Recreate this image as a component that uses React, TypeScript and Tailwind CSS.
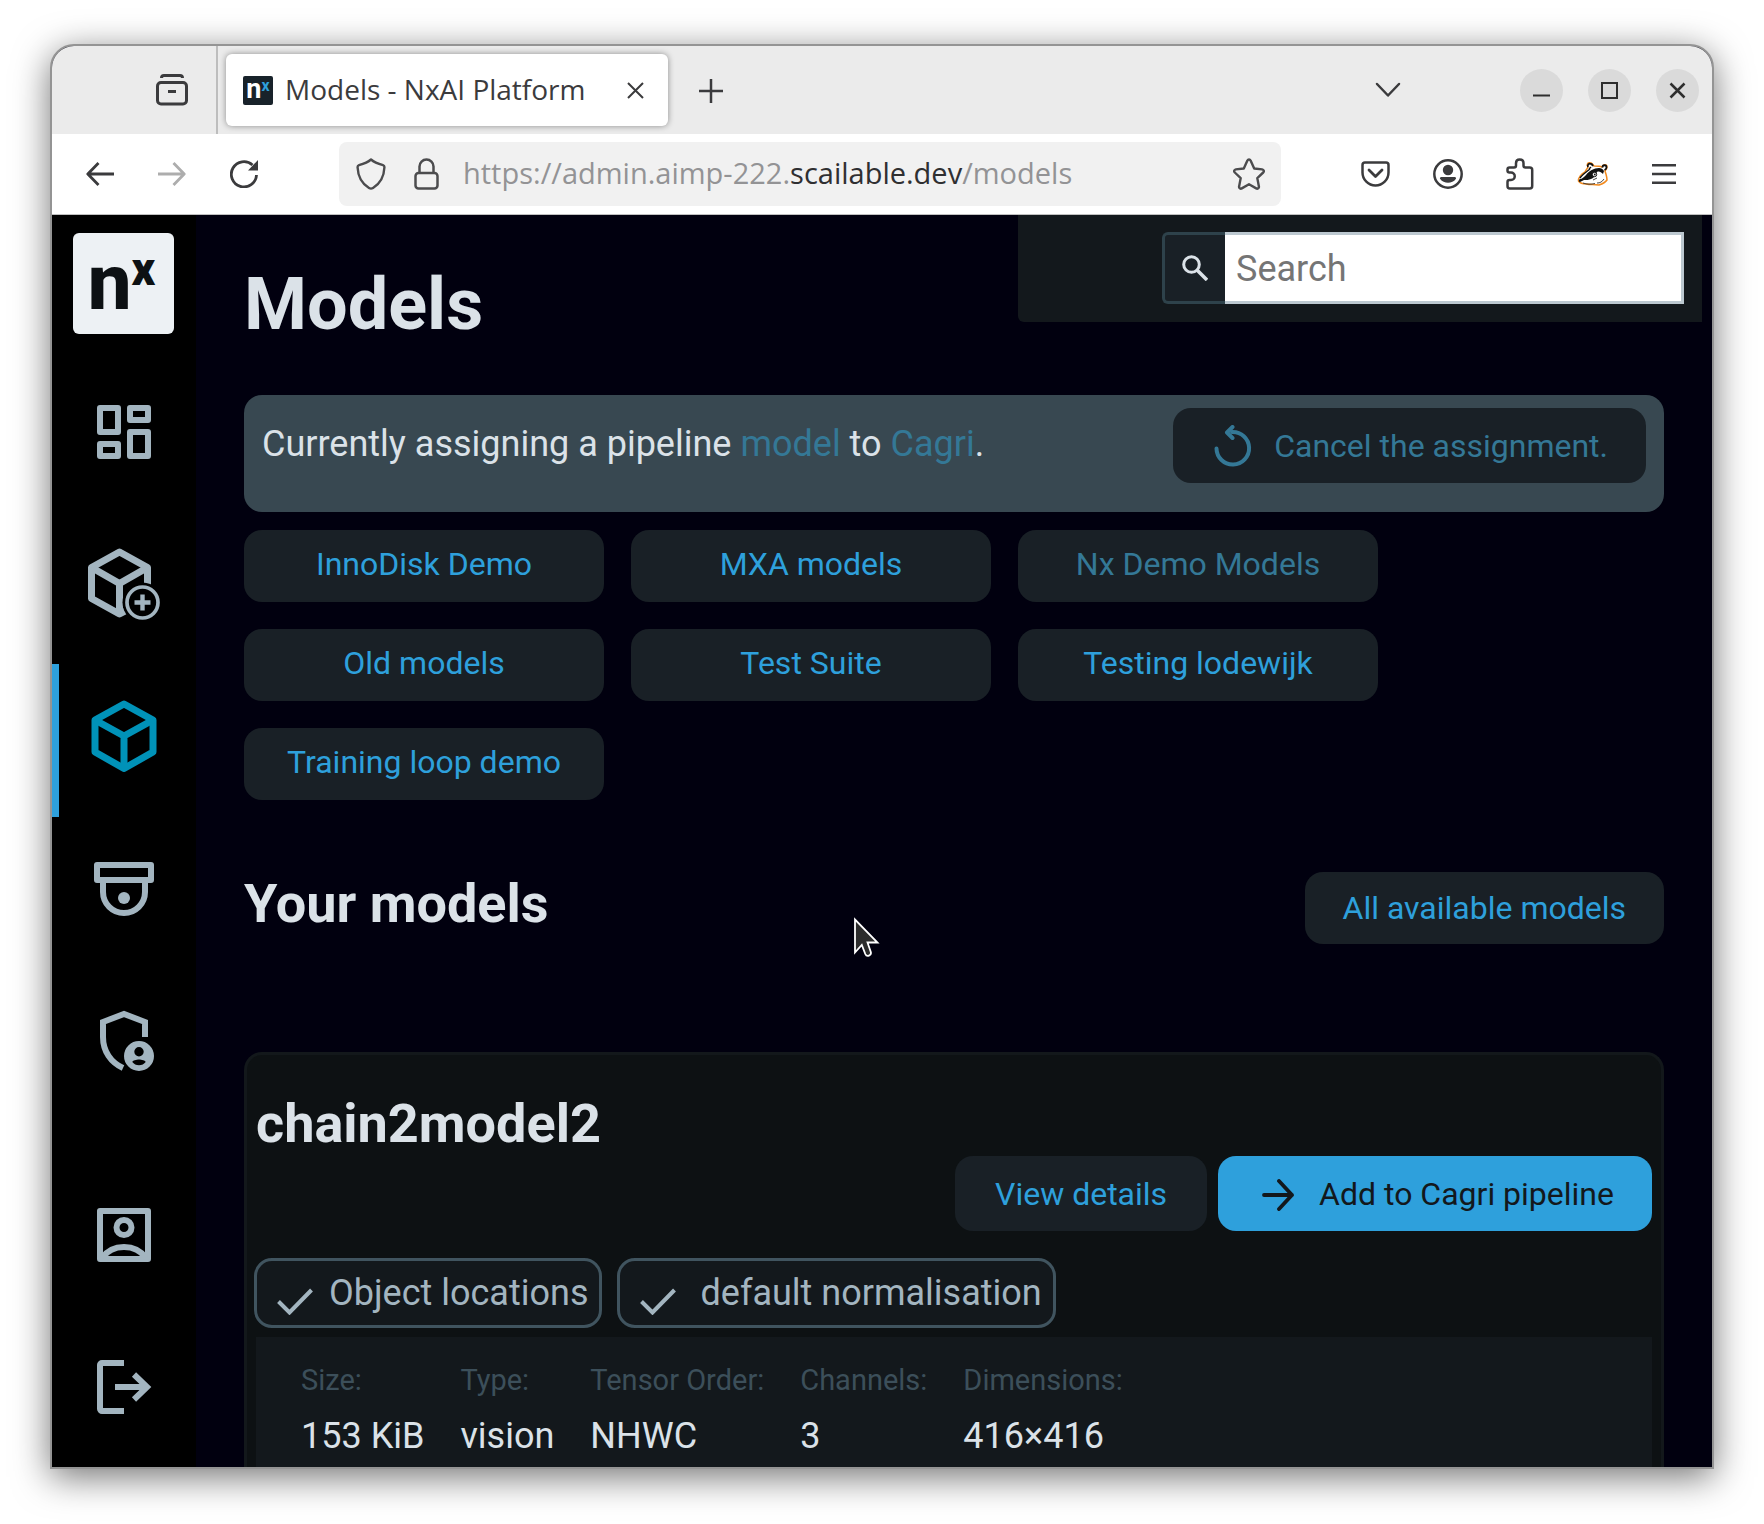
import React from "react";

type IconProps = { w: number; h: number; children: React.ReactNode; className?: string };

function Icon({ w, h, children, className = "" }: IconProps) {
  return (
    <svg
      width={w}
      height={h}
      viewBox={`0 0 ${w} ${h}`}
      fill="none"
      stroke="currentColor"
      aria-hidden="true"
      className={`shrink-0 ${className}`}
    >
      {children}
    </svg>
  );
}

/* ---------- Browser chrome ---------- */

function WindowButton({ label, children }: { label: string; children: React.ReactNode }) {
  return (
    <button
      aria-label={label}
      className="flex size-[43px] items-center justify-center rounded-full bg-[#dadada] text-[#2e2e2e]"
    >
      {children}
    </button>
  );
}

function TabBar() {
  return (
    <div className="flex h-[88px] items-center bg-[#ebebeb] pr-[13px] text-[#3b3b3d]">
      <div className="flex h-full w-[166px] items-center justify-end border-r-2 border-[#bdbdbd] pr-7">
        <button aria-label="View recent browsing">
          <Icon w={32} h={32}>
            <path d="M5.500 4c0-1.500 1-2.500 2.500-2.500h16c1.500 0 2.500 1 2.500 2.500" strokeWidth="3" />
            <rect x="1.500" y="8.500" width="29" height="21.500" rx="3.500" strokeWidth="3" />
            <path d="M12 17.500h8" strokeWidth="3" />
          </Icon>
        </button>
      </div>
      <div className="ml-2 flex h-[72px] w-[442px] items-center rounded-md bg-white pr-6 pl-[17px] shadow-[0_0_6px_rgba(0,0,0,0.4)]">
        <span className="flex h-[29px] w-[30px] shrink-0 justify-center rounded-xs bg-[#18222a] font-['Roboto',sans-serif] font-bold">
          <span className="text-[27px] leading-[27px] text-white">n</span>
          <span className="text-[16px] leading-[19px] text-[#2ea0dc]">x</span>
        </span>
        <span className="ml-3 grow pb-0.5 text-[28px] leading-9 whitespace-nowrap">Models - NxAI Platform</span>
        <button aria-label="Close tab">
          <Icon w={17} h={17}>
            <path d="M1 1l15 15M16 1L1 16" strokeWidth="2" />
          </Icon>
        </button>
      </div>
      <button aria-label="New tab" className="ml-[31px] pt-0.5">
        <Icon w={24} h={24}>
          <path d="M12 0v24M0 12h24" strokeWidth="2.500" />
        </Icon>
      </button>
      <div className="grow" />
      <button aria-label="List all tabs" className="mr-[119px]">
        <Icon w={26} h={16}>
          <path d="M2 2l11 11.500L24 2" strokeWidth="2.500" strokeLinecap="round" strokeLinejoin="round" />
        </Icon>
      </button>
      <div className="flex gap-[25px]">
        <WindowButton label="Minimize">
          <Icon w={17} h={17}>
            <path d="M0 13.500h17" strokeWidth="2" />
          </Icon>
        </WindowButton>
        <WindowButton label="Maximize">
          <Icon w={17} h={17}>
            <path d="M1 1h15v15H1z" strokeWidth="2" />
          </Icon>
        </WindowButton>
        <WindowButton label="Close">
          <Icon w={17} h={17}>
            <path d="M1.500 1.500l14 14M15.500 1.500l-14 14" strokeWidth="2.500" />
          </Icon>
        </WindowButton>
      </div>
    </div>
  );
}

function Badger() {
  return (
    <Icon w={32} h={26}>
      <path
        d="M1.500 20C1 17 4 13 8 11c1-2 2-3 3-5C9 3 11 1 14 2c2 1 2 2 3 3 3 0 6 0 8 1 1-3 5-3 5 0 0 2-1 3-2 4 1 3 2 6 2 9-2 3-5 4-8 5-5-1-8 0-13-1-3 0-6-1-7.500-3z"
        fill="#fff"
        stroke="#f28a1e"
        strokeWidth="1.500"
      />
      <path d="M11 6c-1-2 1-4 3-3 1 0 2 2 2 2M25.500 6.500c0-3 4-3 4 0 0 1-1 2-2 2.500" stroke="#111" strokeWidth="1.800" />
      <path d="M9 14c3-4 8-7 13-7 2 0 4 1 5 3l-1 3c-2-2-4-3-6-2-1 3-3 6-6 7-2 1-5 1-7 1l-4 2c-2 0-1-3 0-3 2 0 4-2 6-4z" fill="#111" stroke="none" />
      <path d="M3 17c2-3 6-6 10-9M12 8l2-2" stroke="#111" strokeWidth="1.400" />
      <circle cx="17.500" cy="13.500" r="2.200" fill="#fff" stroke="#111" strokeWidth="1" />
      <circle cx="17.800" cy="13.500" r="0.900" fill="#111" stroke="none" />
      <path d="M6 22c4 1.500 8 1.500 12 .5M20 22c3 0 5-1 7-4M16 19l4-2" stroke="#333" strokeWidth="0.900" />
    </Icon>
  );
}

function NavBar() {
  return (
    <div className="flex h-[81px] items-center border-b border-[#c0c0c0] bg-white pr-9 pl-[34px] text-[#3b3b3d]">
      <div className="flex shrink-0 items-center gap-[44px]">
        <button aria-label="Back">
          <Icon w={28} h={24}>
            <path d="M28 12H2M12.500 1L1.800 12l10.700 11" strokeWidth="2.800" strokeLinejoin="round" />
          </Icon>
        </button>
        <button aria-label="Forward" className="text-[#adadad]" disabled>
          <Icon w={28} h={24}>
            <path d="M0 12h26M15.500 1l10.700 11-10.700 11" strokeWidth="2.800" strokeLinejoin="round" />
          </Icon>
        </button>
        <button aria-label="Reload">
          <Icon w={30} h={28}>
            <path d="M26.500 15A12.600 12.600 0 1 1 22.500 5" strokeWidth="2.800" />
            <path d="M28 0v10.500H18L28 0z" fill="currentColor" stroke="none" />
          </Icon>
        </button>
      </div>
      <div className="ml-[79px] flex h-16 max-w-[942px] flex-1 items-center rounded-lg bg-[#f1f1f1] pr-4 pl-[17px] text-[#4c4c4e]">
        <Icon w={30} h={32}>
          <path
            d="M15 1.500C11.500 4.500 7 6 3 7.200 1.800 7.600 1.500 8.500 1.600 9.500 2 19 6.500 26 13 30c1.300.8 2.700.8 4 0 6.500-4 11-11 11.400-20.500.1-1-.2-1.900-1.400-2.300C23 6 18.500 4.500 15 1.500z"
            strokeWidth="2.400"
            strokeLinejoin="round"
          />
        </Icon>
        <Icon w={26} h={32} className="ml-7">
          <rect x="1.500" y="15" width="22" height="15.500" rx="3" strokeWidth="2.500" />
          <path d="M5.500 15V8.500a7 7 0 0 1 14 0V15" strokeWidth="2.500" />
        </Icon>
        <input
          aria-label="Address"
          defaultValue="https://admin.aimp-222.scailable.dev/models"
          className="sr-only"
        />
        <span className="ml-[23px] grow pb-0.5 text-[29px] leading-9 whitespace-nowrap text-[#939395]">
          https://admin.aimp-222.<span className="text-[#2f2f31]">scailable.dev</span>/models
        </span>
        <button aria-label="Bookmark this page">
          <Icon w={32} h={32}>
            <path
              d="M14.400 2.500c.7-1.300 2.500-1.300 3.200 0l3.600 8 8 .9c1.600.2 2.200 2 1 3.100l-5.900 5.600 1.600 8.400c.3 1.500-1.300 2.700-2.700 1.900L16 26.300l-7.200 4.100c-1.400.8-3-.4-2.700-1.900l1.600-8.400-5.900-5.600c-1.200-1.100-.6-2.900 1-3.100l8-.9z"
              strokeWidth="2.400"
              strokeLinejoin="round"
            />
          </Icon>
        </button>
      </div>
      <div className="ml-auto flex shrink-0 items-center gap-[43px] pl-20">
        <button aria-label="Save to Pocket">
          <Icon w={29} h={26}>
            <path d="M4 1.500h21c1.500 0 2.500 1 2.500 2.500v7.500a13 13 0 0 1-26 0V4c0-1.500 1-2.500 2.500-2.500z" strokeWidth="2.500" />
            <path d="M8 9l6.500 6.500L21 9" strokeWidth="2.800" strokeLinecap="round" strokeLinejoin="round" />
          </Icon>
        </button>
        <button aria-label="Account">
          <Icon w={30} h={30}>
            <circle cx="15" cy="15" r="13.700" strokeWidth="2.500" />
            <circle cx="15" cy="11" r="5.200" fill="currentColor" stroke="none" />
            <path d="M8.500 18h13c1.500 0 2 1 1.300 2-3.500 5-12 5-15.600 0-.7-1-.2-2 1.300-2z" fill="currentColor" stroke="none" />
          </Icon>
        </button>
        <button aria-label="Extensions">
          <Icon w={28} h={32}>
            <path
              d="M3.500 9.500H8c1.300 0 2-.5 2-2V5.200C10 3 11.500 1.500 13.700 1.500s3.800 1.500 3.800 3.700v2.300c0 1.500.7 2 2 2h4.200c1.500 0 2.500 1 2.500 2.500v16c0 1.500-1 2.500-2.500 2.500H3.800c-1.500 0-2.300-1-2.300-2.500v-4c0-1.300.6-2 2-2H5a3.500 3.500 0 0 0 0-7.500H3.500c-1.400 0-2-.6-2-1.700v-1.300c0-1.300.7-2 2-2z"
              strokeWidth="2.500"
            />
          </Icon>
        </button>
        <button aria-label="Privacy Badger">
          <Badger />
        </button>
        <button aria-label="Application menu">
          <Icon w={24} h={20}>
            <path d="M0 1.200h24M0 10h24M0 18.800h24" strokeWidth="2.400" />
          </Icon>
        </button>
      </div>
    </div>
  );
}

/* ---------- Sidebar ---------- */

const navIcons = {
  dashboard: (
    <g strokeWidth="6" strokeLinejoin="round">
      <rect x="12" y="12" width="18" height="24" />
      <rect x="42" y="12" width="18" height="12" />
      <rect x="12" y="48" width="18" height="12" />
      <rect x="42" y="36" width="18" height="24" />
    </g>
  ),
  addModel: (
    <g>
      <mask id="badge-gap">
        <rect width="72" height="72" fill="#fff" stroke="none" />
        <circle cx="54.500" cy="54.500" r="20" fill="#000" stroke="none" />
      </mask>
      <g mask="url(#badge-gap)" strokeWidth="7" strokeLinejoin="round">
        <path d="M31.500 4l28 15.500v32l-28 14.500L3.500 50.500V19.500z" />
        <path d="M3.500 19.500l28 16 28-16M31.500 35.500v30" />
      </g>
      <circle cx="54.500" cy="54.500" r="15.500" strokeWidth="3.700" />
      <path d="M54.500 46.500v16M46.500 54.500h16" strokeWidth="4.400" />
    </g>
  ),
  models: (
    <g strokeWidth="7" strokeLinejoin="round">
      <path d="M36 4l29 16v32L36 68.500 7 52V20z" />
      <path d="M7 20l29 16 29-16M36 36v32" />
    </g>
  ),
  cameras: (
    <g strokeWidth="6" strokeLinejoin="round">
      <rect x="9" y="13" width="54" height="15" />
      <path d="M15 28v12a21 21 0 0 0 42 0V28" />
      <circle cx="36" cy="46" r="6" fill="currentColor" stroke="none" />
    </g>
  ),
  admin: (
    <g>
      <path d="M57 33V18L36 10 15 18v15c0 14.500 8 25.500 20 31" strokeWidth="6" />
      <path
        fillRule="evenodd"
        d="M51 37a15 15 0 1 0 0 30 15 15 0 0 0 0-30zm0 6a4.700 4.700 0 1 1 0 9.400 4.700 4.700 0 0 1 0-9.400zm0 12.500c2.500 0 6.500 1 6.700 2.500-1.500 2-4 3.300-6.700 3.300S45.800 60 44.300 58c.2-1.500 4.200-2.500 6.700-2.500z"
        fill="currentColor"
        stroke="none"
      />
    </g>
  ),
  account: (
    <g strokeWidth="6" strokeLinejoin="round">
      <rect x="12" y="12" width="48" height="48" />
      <circle cx="36" cy="28.500" r="7.500" />
      <path d="M14 59c5-7 13-11 22-11s17 4 22 11" />
    </g>
  ),
  logout: (
    <g strokeWidth="6">
      <path d="M36 12H14a2 2 0 0 0-2 2v44c0 1 1 2 2 2h22" />
      <path d="M27 36h31M46 23.500L59 36 46 48.500" />
    </g>
  ),
};

type NavName = keyof typeof navIcons;

function NavItem({ name, label, active }: { name: NavName; label: string; active?: boolean }) {
  return (
    <a
      href="#"
      aria-label={label}
      aria-current={active ? "page" : undefined}
      className={`relative flex h-[152px] items-center justify-center ${active ? "text-[#0092b8]" : "text-[#a3b5c0]"}`}
    >
      {active && <span className="absolute top-1 left-0 h-[153px] w-[7px] bg-[#2ea0dc]" />}
      <Icon w={72} h={72}>
        {navIcons[name]}
      </Icon>
    </a>
  );
}

function Sidebar() {
  return (
    <nav aria-label="Main" className="flex w-36 shrink-0 flex-col bg-black pt-[18px] pb-1">
      <a
        href="#"
        aria-label="Nx home"
        className="ml-[21px] flex size-[101px] justify-center rounded-md bg-[#edf1f4] pr-1 text-[#0d1113]"
      >
        <span className="text-[78px] leading-[99px] font-extrabold">n</span>
        <span className="text-[46px] leading-[73px] font-black">x</span>
      </a>
      <div className="mt-[22px] grow">
        <NavItem name="dashboard" label="Dashboard" />
        <NavItem name="addModel" label="Add model" />
        <NavItem name="models" label="Models" active />
        <NavItem name="cameras" label="Devices" />
        <NavItem name="admin" label="Administration" />
      </div>
      <NavItem name="account" label="Account" />
      <NavItem name="logout" label="Log out" />
    </nav>
  );
}

/* ---------- Page ---------- */

const categories = [
  { name: "InnoDisk Demo" },
  { name: "MXA models" },
  { name: "Nx Demo Models", current: true },
  { name: "Old models" },
  { name: "Test Suite" },
  { name: "Testing lodewijk" },
  { name: "Training loop demo" },
];

const facts = [
  ["Size:", "153 KiB"],
  ["Type:", "vision"],
  ["Tensor Order:", "NHWC"],
  ["Channels:", "3"],
  ["Dimensions:", "416×416"],
];

function Pill({ children }: { children: React.ReactNode }) {
  return (
    <li className="flex h-[70px] items-center rounded-[18px] border-3 border-[#40545f] bg-[#13181c] pr-[11px] pl-5 text-4xl leading-[42px] text-[#a3b5c0]">
      <Icon w={36} h={27} className="mt-4">
        <path d="M1.500 13.500L12.500 24.500 34.500 2" strokeWidth="4" />
      </Icon>
      {children}
    </li>
  );
}

function ModelCard() {
  return (
    <article className="mt-[108px] rounded-t-[18px] border-3 border-b-0 border-[#13181b] bg-[#0d1113] px-[9px] pt-[37px]">
      <h3 className="text-[54px] leading-16 font-bold">chain2model2</h3>
      <div className="flex justify-end gap-[11px] text-[32px] leading-10">
        <button className="h-[75px] rounded-[18px] bg-[#192026] px-10 text-[#2ea0dc]">View details</button>
        <button className="flex h-[75px] items-center rounded-[18px] bg-[#2ea0dc] pr-[38px] pl-11 text-[#13181c]">
          <Icon w={33} h={32} className="mt-[3px] mr-6">
            <path d="M2 16h28M17 2l13 14-13 14" strokeWidth="3.800" strokeLinecap="round" strokeLinejoin="round" />
          </Icon>
          Add to Cagri pipeline
        </button>
      </div>
      <ul className="mt-[27px] -ml-0.5 flex gap-[15px]">
        <Pill>
          <span className="ml-4">Object locations</span>
        </Pill>
        <Pill>
          <span className="ml-6">default normalisation</span>
        </Pill>
      </ul>
      <dl className="mt-[9px] flex gap-9 bg-[#13181c] px-[45px] pt-[25px] pb-[9px]">
        {facts.map(([label, value]) => (
          <div key={label}>
            <dt className="text-[29px] leading-9 text-[#3c4f5a]">{label}</dt>
            <dd className="mt-4 text-4xl leading-11">{value}</dd>
          </div>
        ))}
      </dl>
    </article>
  );
}

function SearchBox() {
  return (
    <form
      role="search"
      onSubmit={(e) => e.preventDefault()}
      className="mr-2.5 flex h-[107px] w-[684px] justify-end rounded-bl-md bg-[#13181c] pt-[17px] pr-[18px]"
    >
      <button
        aria-label="Search"
        className="flex h-[72px] w-[63px] items-center justify-center rounded-l-md border-3 border-r-0 border-[#2e424b] bg-[#192026] text-[#dbe2e8]"
      >
        <Icon w={26} h={26}>
          <circle cx="9.500" cy="9.500" r="7.800" strokeWidth="3" />
          <path d="M15 15l10 10" strokeWidth="3.500" />
        </Icon>
      </button>
      <input
        type="search"
        aria-label="Search models"
        placeholder="Search"
        className="h-[72px] w-[459px] border-3 border-l-0 border-[#bcc8d0] bg-white pt-0.5 pl-[11px] text-4xl text-black outline-none placeholder:text-[#757575]"
      />
    </form>
  );
}

function Cursor() {
  return (
    <svg width="26" height="40" viewBox="0 0 26 40" aria-hidden="true" className="absolute top-[702px] left-[658px]">
      <path
        d="M1 2.500v33l6.800-7.500 3.500 9c1.500 3.500 6.500 1.700 5.500-2l-3.300-9.500H23.500z"
        fill="#2c2c2c"
        stroke="#fff"
        strokeWidth="1.800"
      />
    </svg>
  );
}

function Page() {
  return (
    <main className="relative grow bg-[#01000f] text-[#dbe2e8]">
      <header className="flex items-start justify-between pl-12">
        <h1 className="pt-[50px] text-7xl leading-20 font-bold">Models</h1>
        <SearchBox />
      </header>
      <div className="px-12">
        <section className="mt-[50px] flex items-center justify-between rounded-[18px] bg-[#384851] px-[18px] pt-[13px] pb-[29px]">
          <p className="pb-1 text-4xl leading-11">
            Currently assigning a pipeline{" "}
            <a href="#" className="text-[#347896]">
              model
            </a>{" "}
            to{" "}
            <a href="#" className="text-[#347896]">
              Cagri
            </a>
            .
          </p>
          <button className="flex h-[75px] items-center rounded-[18px] bg-[#192026] pr-[38px] pl-[41px] text-[32px] leading-10 text-[#347896]">
            <Icon w={38} h={42} className="mr-[22px]">
              <path d="M2.500 23.500a16.300 16.300 0 1 0 15.500-16.500" strokeWidth="4" strokeLinecap="round" />
              <path d="M18.500 2L13 7.500l5.500 5.500" strokeWidth="4" strokeLinecap="round" strokeLinejoin="round" />
            </Icon>
            Cancel the assignment.
          </button>
        </section>
        <div className="mt-[18px] flex flex-wrap gap-[27px]">
          {categories.map((c) => (
            <button
              key={c.name}
              className={`h-[72px] w-[360px] rounded-[18px] bg-[#192026] pb-1 text-[32px] leading-10 ${c.current ? "text-[#347896]" : "text-[#2ea0dc]"}`}
            >
              {c.name}
            </button>
          ))}
        </div>
        <div className="mt-[72px] flex items-center justify-between">
          <h2 className="pb-2 text-[54px] leading-16 font-bold">Your models</h2>
          <button className="h-[72px] rounded-[18px] bg-[#192026] px-[38px] text-[32px] leading-10 text-[#2ea0dc]">
            All available models
          </button>
        </div>
        <ModelCard />
      </div>
      <Cursor />
    </main>
  );
}

export default function App() {
  return (
    <div className="bg-white px-[50px] pt-11 pb-14 font-['Open_Sans',sans-serif]">
      <div className="overflow-hidden rounded-t-3xl border-2 border-[#949494] bg-[#01000f] shadow-[0_8px_36px_rgba(0,0,0,0.55)]">
        <TabBar />
        <NavBar />
        <div className="flex font-['Roboto',sans-serif]">
          <Sidebar />
          <Page />
        </div>
      </div>
    </div>
  );
}
